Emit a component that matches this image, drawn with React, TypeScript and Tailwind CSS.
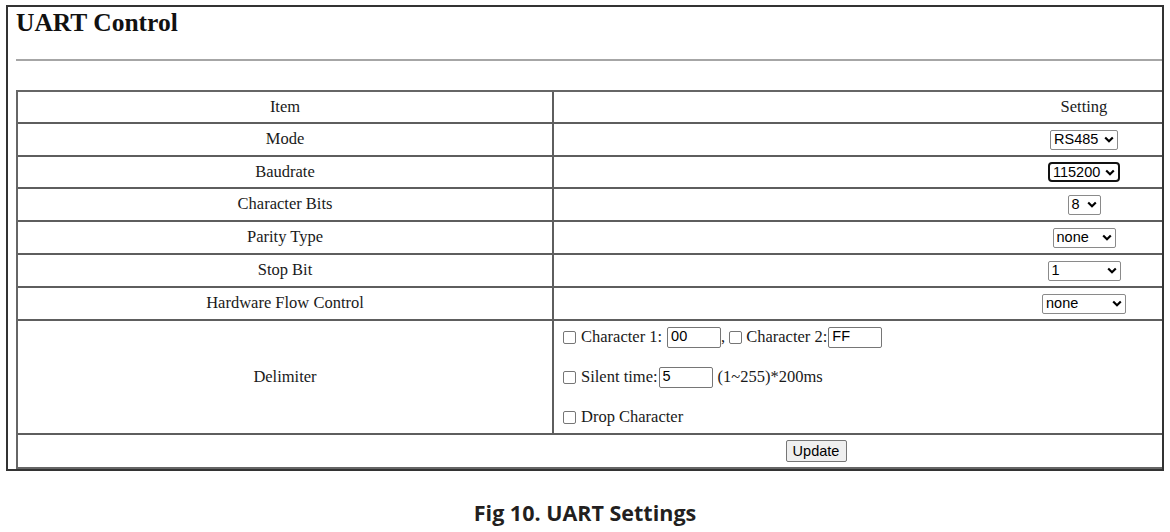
import React from 'react';

interface SettingRow {
  label: string;
  value: string;
  width: string;
  height: string;
  focused?: boolean;
}

const rows: SettingRow[] = [
  { label: 'Mode', value: 'RS485', width: 'w-[68px]', height: 'h-[33px]' },
  { label: 'Baudrate', value: '115200', width: 'w-[72px]', height: 'h-[32px]', focused: true },
  { label: 'Character Bits', value: '8', width: 'w-[33px]', height: 'h-[33px]' },
  { label: 'Parity Type', value: 'none', width: 'w-[63px]', height: 'h-[33px]' },
  { label: 'Stop Bit', value: '1', width: 'w-[73px]', height: 'h-[33px]' },
  { label: 'Hardware Flow Control', value: 'none', width: 'w-[84px]', height: 'h-[33px]' },
];

const control = "font-['Liberation_Sans',Arial,sans-serif] text-[14.5px] text-black";

function Chevron() {
  return (
    <svg width="10" height="7" viewBox="0 0 10 7" className="shrink-0">
      <polyline points="1.2,1.5 5,5.2 8.8,1.5" fill="none" stroke="#000" strokeWidth="2.2" />
    </svg>
  );
}

// native-looking dropdown
function Dropdown({ value, width, focused }: { value: string; width: string; focused?: boolean }) {
  return (
    <span
      className={`inline-flex h-[20px] items-center justify-between bg-white pl-[3px] pr-[3px] leading-none ${width} ${control} ${
        focused ? 'border-2 border-[#111] rounded-[4px]' : 'border border-[#8a8a8a] rounded-[2px]'
      }`}
    >
      <span>{value}</span>
      <Chevron />
    </span>
  );
}

function Check({ className = '' }: { className?: string }) {
  return (
    <input
      type="checkbox"
      className={`appearance-none w-[13px] h-[13px] shrink-0 border border-[#767676] rounded-[2px] bg-white ${className}`}
    />
  );
}

function TextBox({ value }: { value: string }) {
  return (
    <input
      type="text"
      defaultValue={value}
      className={`w-[54px] h-[21px] border border-[#767676] rounded-[2px] px-[3px] bg-white ${control}`}
    />
  );
}

export default function App() {
  return (
    <div className="w-[1170px] h-[532px] bg-white font-['Liberation_Serif','Times_New_Roman',serif] text-[#1a1a1a]">
      {/* figure frame, the page inside is wider and gets cut at the right */}
      <div className="ml-[6px] pt-[5px]">
        <div className="w-[1158px] h-[466px] border-2 border-[#333] overflow-hidden flex flex-col pl-[8px]">
          <h2 className="mt-[1px] h-[30px] leading-[30px] text-[25.5px] font-bold text-[#111]">UART Control</h2>
          <div className="mt-[21px] h-[2px] w-full bg-[#a6a6a6]" />

          <div className="mt-[29px] w-[1600px] shrink-0 border-2 border-[#666] text-[16.5px]">
            <div className="flex h-[32px] border-b-2 border-[#5e5e5e]">
              <div className="w-[536px] border-r-2 border-[#5e5e5e] flex items-center justify-center">Item</div>
              <div className="flex-1 flex items-center justify-center">Setting</div>
            </div>

            {rows.map((row) => (
              <div key={row.label} className={`flex ${row.height} border-b-2 border-[#5e5e5e]`}>
                <div className="w-[536px] border-r-2 border-[#5e5e5e] flex items-center justify-center">{row.label}</div>
                <div className="flex-1 flex items-center justify-center">
                  <Dropdown value={row.value} width={row.width} focused={row.focused} />
                </div>
              </div>
            ))}

            <div className="flex h-[114px] border-b-2 border-[#5e5e5e]">
              <div className="w-[536px] border-r-2 border-[#5e5e5e] flex items-center justify-center">Delimiter</div>
              <div className="flex-1 flex flex-col gap-2 pl-[9px]">
                <div className="h-8 flex items-center">
                  <Check className="mr-[5px]" />
                  <span className="mr-[5px]">Character 1:</span>
                  <TextBox value="00" />
                  <span className="mr-[4px]">,</span>
                  <Check className="mr-[4px]" />
                  <span className="mr-[1px]">Character 2:</span>
                  <TextBox value="FF" />
                </div>
                <div className="h-8 flex items-center">
                  <Check className="mr-[5px]" />
                  <span className="mr-[1px]">Silent time:</span>
                  <TextBox value="5" />
                  <span className="ml-[5px]">(1~255)*200ms</span>
                </div>
                <div className="h-8 flex items-center">
                  <Check className="mr-[5px]" />
                  <span>Drop Character</span>
                </div>
              </div>
            </div>

            <div className="flex h-[32px] items-center justify-center">
              <button
                className={`w-[61px] h-[22px] border border-[#767676] rounded-[2px] bg-[#efefef] leading-none ${control}`}
              >
                Update
              </button>
            </div>
          </div>
        </div>
      </div>

      <p className="mt-[28px] text-center text-[21.5px] leading-[28px] font-bold font-['Open_Sans','Noto_Sans',sans-serif] text-[#231f20]">
        Fig 10. UART Settings
      </p>
    </div>
  );
}
